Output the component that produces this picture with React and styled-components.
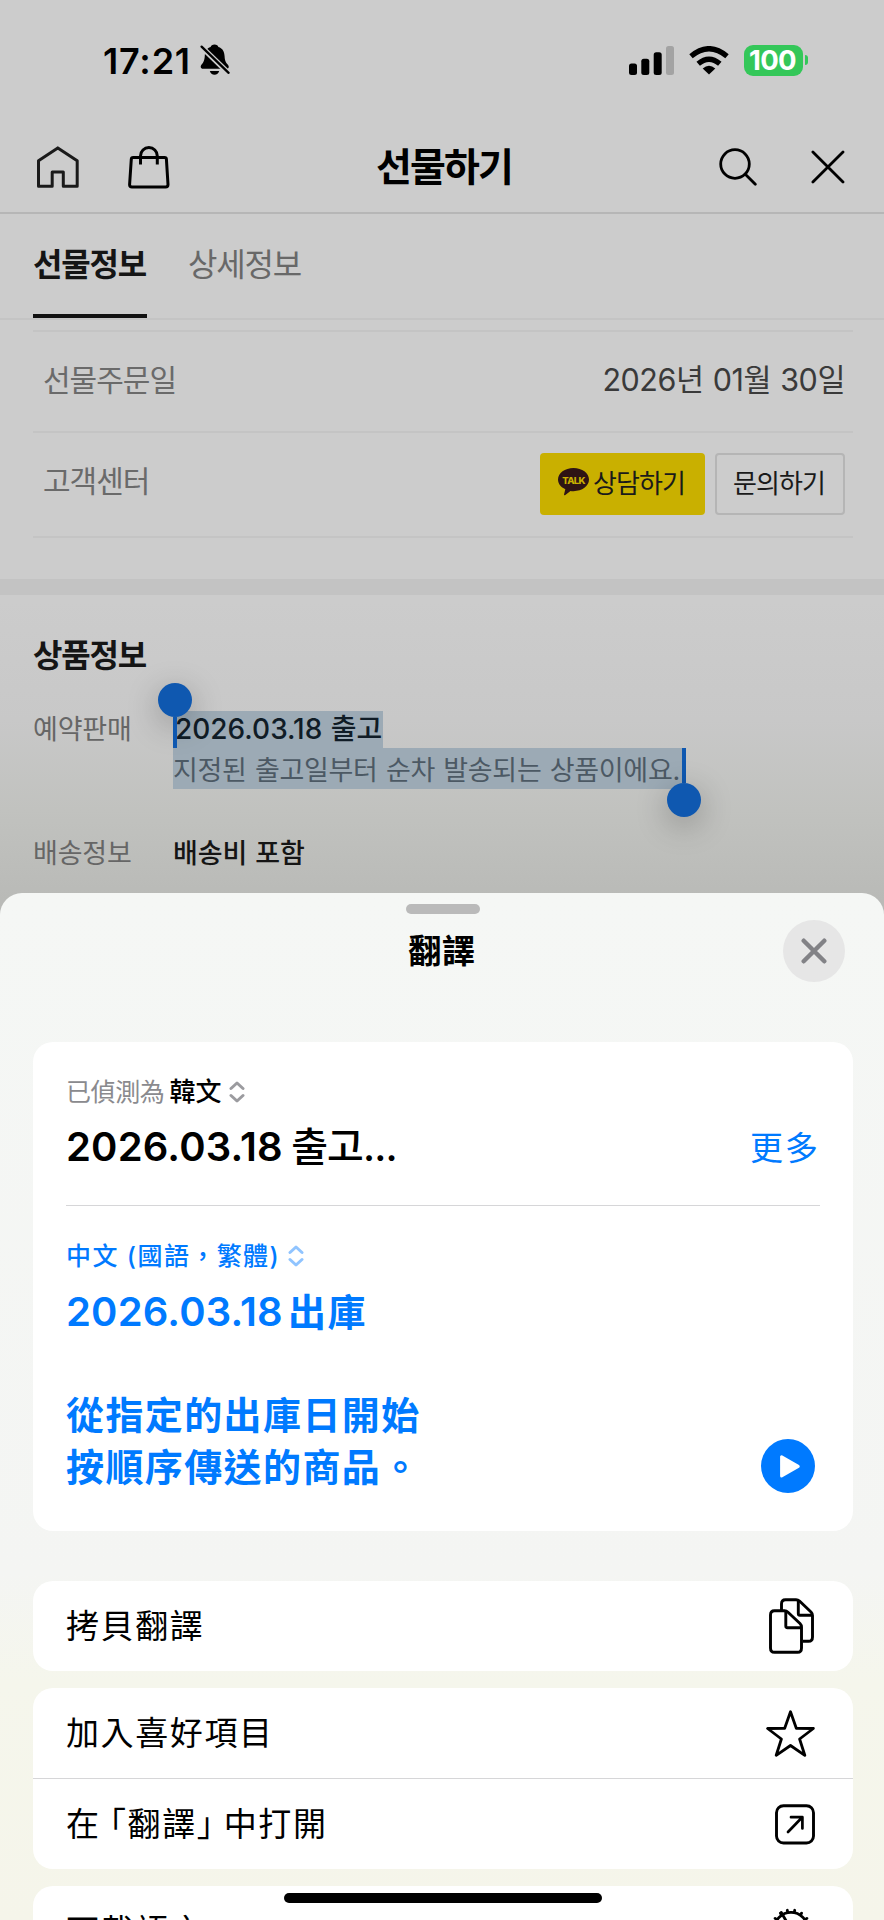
import React from "react";
import styled, { createGlobalStyle } from "styled-components";

function App() {
  return (
    <Screen>
      <GlobalStyle />
      <StatusBar />
      <Header />
      <Tabs>
        <Tab $active>선물정보</Tab>
        <Tab>상세정보</Tab>
      </Tabs>
      <OrderInfo />
      <Band />
      <ProductInfo />
      <TranslateSheet />
      <HomeIndicator />
    </Screen>
  );
}

function StatusBar() {
  return (
    <StatusWrap>
      <StatusTime>
        <Time>17:21</Time>
        <BellOff />
      </StatusTime>
      <StatusRight>
        <Signal />
        <Wifi />
        <Battery>
          <BatteryBody>100</BatteryBody>
          <BatteryCap />
        </Battery>
      </StatusRight>
    </StatusWrap>
  );
}

function Header() {
  return (
    <HeaderWrap>
      <HeaderSide>
        <svg width="42" height="42" viewBox="0 0 42 42" fill="none" stroke="#1a1a1a" strokeWidth="3" strokeLinejoin="round">
          <path d="M20.8 1.9L1.5 14.8V40.2H15.2V26H26.3V40.2H40.2V14.8Z" />
        </svg>
        <svg width="42" height="43" viewBox="0 0 42 43" fill="none" stroke="#000" strokeWidth="3" strokeLinejoin="round">
          <path d="M5.2 11.5H36.6Q38.3 11.5 38.4 13.2L40 38.5Q40 41 37.6 41H4Q1.5 41 1.6 38.5L3.3 13.2Q3.4 11.5 5.2 11.5Z" />
          <path d="M12.5 18.5V10a8.4 8.4 0 0 1 16.8 0V18.5" />
        </svg>
      </HeaderSide>
      <HeaderTitle>선물하기</HeaderTitle>
      <HeaderSide $right>
        <svg width="38" height="38" viewBox="0 0 38 38" fill="none" stroke="#000" strokeWidth="2.8" strokeLinecap="round">
          <circle cx="16" cy="16" r="14.3" />
          <path d="M26.3 26.3L36.3 36.3" />
        </svg>
        <svg width="34" height="34" viewBox="0 0 34 34" fill="none" stroke="#000" strokeWidth="2.8" strokeLinecap="round">
          <path d="M1.9 1.9L32 32M32 1.9L1.9 32" />
        </svg>
      </HeaderSide>
    </HeaderWrap>
  );
}

function OrderInfo() {
  return (
    <OrderList>
      <OrderRow $height={101}>
        <OrderLabel>선물주문일</OrderLabel>
        <OrderValue>2026년 01월 30일</OrderValue>
      </OrderRow>
      <OrderRow $height={105}>
        <OrderLabel $lift>고객센터</OrderLabel>
        <Buttons>
          <TalkButton>
            <TalkIcon />
            상담하기
          </TalkButton>
          <AskButton>문의하기</AskButton>
        </Buttons>
      </OrderRow>
    </OrderList>
  );
}

function ProductInfo() {
  return (
    <Product>
      <ProductTitle>상품정보</ProductTitle>
      <ProductRow>
        <ProductLabel>예약판매</ProductLabel>
        <Selection>
          <SelectedDate>2026.03.18 출고</SelectedDate>
          <SelectedNote>지정된 출고일부터 순차 발송되는 상품이에요.</SelectedNote>
          <Handle $start>
            <Knob />
            <Caret $height={31} />
          </Handle>
          <Handle>
            <Caret $height={35} />
            <Knob />
          </Handle>
        </Selection>
      </ProductRow>
      <ProductRow>
        <ProductLabel>배송정보</ProductLabel>
        <ProductValue>배송비 포함</ProductValue>
      </ProductRow>
    </Product>
  );
}

function TranslateSheet() {
  return (
    <Sheet>
      <Grabber />
      <SheetHeader>
        <SheetTitle>翻譯</SheetTitle>
        <CloseButton>
          <svg width="26" height="26" viewBox="0 0 26 26" fill="none" stroke="#828286" strokeWidth="4.4" strokeLinecap="round">
            <path d="M2.7 2.7L23.3 23.3M23.3 2.7L2.7 23.3" />
          </svg>
        </CloseButton>
      </SheetHeader>
      <Card>
        <Language>
          <Detected>已偵測為</Detected>
          <Lang>韓文</Lang>
          <Updown color="#9b9b9f" />
        </Language>
        <SourceRow>
          <Phrase>
            2026.03.18 <Korean>출고...</Korean>
          </Phrase>
          <More>更多</More>
        </SourceRow>
        <Divider />
        <Language $target>
          <TargetLang>中文 (國語，繁體)</TargetLang>
          <Updown color="#90c4ff" />
        </Language>
        <TargetDate>
          <Phrase>2026.03.18</Phrase>
          <Phrase $chinese>出庫</Phrase>
        </TargetDate>
        <TargetRow>
          <TargetText>
            從指定的出庫日開始
            <br />
            按順序傳送的商品。
          </TargetText>
          <PlayButton>
            <svg width="20" height="23" viewBox="0 0 20 23" fill="#fff" stroke="#fff" strokeWidth="3" strokeLinejoin="round">
              <path d="M1.6 1.7V21L18.2 11.4Z" />
            </svg>
          </PlayButton>
        </TargetRow>
      </Card>
      <Group $first>
        <Action>
          拷貝翻譯
          <CopyIcon />
        </Action>
      </Group>
      <Group>
        <Action>
          加入喜好項目
          <StarIcon />
        </Action>
        <Action $line>
          在 「翻譯」 中打開
          <OpenIcon />
        </Action>
      </Group>
      <Group>
        <Action>
          下載語言
          <GearIcon />
        </Action>
      </Group>
    </Sheet>
  );
}

/* icons */

const BellOff = () => (
  <svg width="30" height="32" viewBox="0 0 30 32">
    <path
      d="M14.5 0.5c2.2 0 3.6 1.1 3.9 2.5c4.4 1.3 6 5 6.2 9.2c.2 4.8 1.4 6.6 3.3 8.6c1.4 1.6 1 4-1 4H3c-2.4 0-3-2.6-1.4-4.3c2-2.2 2.9-4 3.2-8.8C5 7.6 6.6 4.3 10.6 3C11 1.6 12.3 .5 14.5 .5Z"
      fill="#000"
    />
    <path d="M9.8 27H19.2C18.6 29.4 16.8 30.8 14.5 30.8S10.4 29.4 9.8 27Z" fill="#000" />
    <path d="M1 2.5L29 29.5" stroke="#ccc" strokeWidth="5.4" />
    <path d="M1.6 2.6L28.6 28.8" stroke="#000" strokeWidth="2.3" strokeLinecap="round" />
  </svg>
);

const Signal = () => (
  <svg width="45" height="29" viewBox="0 0 45 29">
    <rect x="0" y="17.5" width="8" height="11.5" rx="2.5" />
    <rect x="12.3" y="12.7" width="8" height="16.3" rx="2.5" />
    <rect x="24.7" y="6.3" width="8" height="22.7" rx="2.5" />
    <rect x="37" y="0" width="8" height="29" rx="2.5" fill="#a3a3a3" />
  </svg>
);

const Wifi = () => (
  <svg width="40" height="29" viewBox="0 0 40 29">
    <path d="M20 28.5L13.7 22.4Q20 17.3 26.3 22.4Z" />
    <path d="M9.2 17.8Q20 8.6 30.8 17.8" fill="none" stroke="#000" strokeWidth="5.3" />
    <path d="M2 10.2Q20 -4.8 38 10.2" fill="none" stroke="#000" strokeWidth="5.3" />
  </svg>
);

const TalkIcon = () => (
  <svg width="31" height="28" viewBox="0 0 31 28">
    <path
      d="M15.5 0C24.1 0 31 5 31 11.6S24.1 23.2 15.5 23.2Q13.8 23.2 12.5 23L7 27.2Q5.7 27.6 6.1 26.3L7.3 21.2C3 19.4 0 16 0 11.6C0 5 6.9 0 15.5 0Z"
      fill="#2e1414"
    />
    <TalkText x="15.6" y="15.6" textAnchor="middle">
      TALK
    </TalkText>
  </svg>
);

const Updown = ({ color }) => (
  <svg width="16" height="22" viewBox="0 0 16 22" fill="none" stroke={color} strokeWidth="3" strokeLinecap="round" strokeLinejoin="round">
    <path d="M2 7.5L8 2L14 7.5M2 14.5L8 20L14 14.5" />
  </svg>
);

const CopyIcon = () => (
  <svg width="46" height="56" viewBox="0 0 46 56" fill="none" stroke="#000" strokeWidth="2.9" strokeLinejoin="round">
    <path d="M12.5 12V6Q12.5 1.7 16.5 1.7H27Q29 1.7 30.5 3L42 14Q43.5 15.5 43.5 17.5V39Q43.5 43.3 39.5 43.3H34" />
    <path d="M29.3 2.5V15.5Q29.3 17.3 31 17.3H43" />
    <path d="M5.5 12.8H15.5Q17.5 12.8 19 14.2L31 25.5Q32.5 27 32.5 29V50Q32.5 54.3 28.5 54.3H5.5Q1.5 54.3 1.5 50V17Q1.5 12.8 5.5 12.8Z" />
    <path d="M16.8 13.5V28Q16.8 29.7 18.5 29.7H32" />
  </svg>
);

const StarIcon = () => (
  <svg width="49" height="47" viewBox="0 0 49 47" fill="none" stroke="#000" strokeWidth="2.8" strokeLinejoin="round">
    <path d="M24.5 1.7L30.3 18.3L47.4 18.5L33.6 29L38.8 45.3L24.5 35.5L10.2 45.3L15.4 29L1.6 18.5L18.7 18.3Z" />
  </svg>
);

const OpenIcon = () => (
  <svg width="40" height="41" viewBox="0 0 40 41" fill="none" stroke="#000" strokeWidth="2.9" strokeLinecap="round" strokeLinejoin="round">
    <rect x="1.5" y="1.7" width="37" height="37.3" rx="7" />
    <path d="M13 28L27 13.5M16 13.2H27.4V24.5" strokeWidth="2.7" />
  </svg>
);

const teeth = Array.from({ length: 16 }, (_, i) => i * 22.5 + 11.25);

const GearIcon = () => (
  <GearSvg width="44" height="44" viewBox="0 0 44 44" fill="none" stroke="#000" strokeWidth="2.8" strokeLinecap="round">
    <circle cx="22" cy="22" r="16.6" />
    {teeth.map((deg) => (
      <path key={deg} d="M22 5V2.9" transform={`rotate(${deg} 22 22)`} />
    ))}
    <path d="M12.3 5.5L19.5 18M19.5 26L12.3 38.5M26.5 22H38.5" />
    <circle cx="22" cy="22" r="4.5" />
  </GearSvg>
);

/* page */

const GlobalStyle = createGlobalStyle`
  * {
    box-sizing: border-box;
  }
  body {
    margin: 0;
    background: #ccc;
  }
  svg {
    display: block;
    flex-shrink: 0;
  }
`;
const Screen = styled.div`
  position: relative;
  display: flex;
  flex-direction: column;
  width: 884px;
  height: 1920px;
  overflow: hidden;
  background: linear-gradient(#cccccc 600px, #c8c8c8 720px, #c1c2bf 810px, #b9bab7 900px);
  font-family: Inter, "Noto Sans CJK KR", sans-serif;
`;
const StatusWrap = styled.div`
  display: flex;
  justify-content: space-between;
  height: 120px;
  padding: 0 76px 0 103px;
`;
const StatusTime = styled.div`
  display: flex;
  align-items: center;
  gap: 10px;
`;
const Time = styled.span`
  width: 87px;
  padding-top: 1px;
  font-size: 36px;
  font-weight: 600;
  line-height: 40px;
  letter-spacing: 0.8px;
  white-space: nowrap;
`;
const StatusRight = styled.div`
  display: flex;
  align-items: center;
  gap: 15px;
`;
const Battery = styled.div`
  display: flex;
  align-items: center;
  gap: 2px;
`;
const BatteryBody = styled.div`
  width: 59px;
  height: 31px;
  padding-right: 2px;
  border-radius: 9px;
  background: #34c759;
  color: #fff;
  font-size: 27.5px;
  font-weight: 700;
  line-height: 31px;
  letter-spacing: -0.6px;
  text-align: center;
`;
const BatteryCap = styled.div`
  width: 3px;
  height: 10px;
  border-radius: 0 4px 4px 0;
  background: #34c759;
`;
const HeaderWrap = styled.div`
  display: flex;
  justify-content: space-between;
  align-items: center;
  height: 94px;
  padding: 2px 39px 0 37px;
  border-bottom: 2px solid #b6b6b6;
`;
const HeaderSide = styled.div`
  display: flex;
  align-items: center;
  justify-content: ${(props) => (props.$right ? "flex-end" : "flex-start")};
  gap: ${(props) => (props.$right ? 54 : 49)}px;
  width: 180px;
`;
const HeaderTitle = styled.h1`
  margin: 0;
  padding-left: 6px;
  font-size: 39px;
  font-weight: 700;
  line-height: 50px;
  letter-spacing: -1.9px;
`;
const Tabs = styled.div`
  display: flex;
  gap: 41px;
  height: 106px;
  padding: 0 33px;
  border-bottom: 2px solid #c4c4c4;
`;
const Tab = styled.div`
  height: 104px;
  width: 114px;
  border-bottom: 4px solid ${(props) => (props.$active ? "#111" : "transparent")};
  color: ${(props) => (props.$active ? "#151515" : "#686868")};
  font-size: 32px;
  font-weight: ${(props) => (props.$active ? 700 : 400)};
  line-height: 101px;
  letter-spacing: -1.2px;
  white-space: nowrap;
`;
const OrderList = styled.div`
  margin: 10px 31px 0 33px;
  border-top: 2px solid #c4c4c4;
`;
const OrderRow = styled.div`
  display: flex;
  justify-content: space-between;
  align-items: center;
  height: ${(props) => props.$height}px;
  padding: 0 8px 0 10px;
  border-bottom: 2px solid #c4c4c4;
`;
const OrderLabel = styled.span`
  padding-bottom: ${(props) => (props.$lift ? 8 : 4)}px;
  color: #6a6a6a;
  font-size: 30px;
  line-height: 40px;
  letter-spacing: -1px;
`;
const OrderValue = styled.span`
  padding-bottom: 3px;
  color: #3a3a3a;
  font-size: 30.5px;
  line-height: 40px;
  letter-spacing: -0.45px;
  word-spacing: 1px;
`;
const Buttons = styled.div`
  display: flex;
  gap: 10px;
  padding-bottom: 2px;
`;
const TalkButton = styled.button`
  display: flex;
  align-items: center;
  gap: 4px;
  width: 165px;
  height: 62px;
  padding: 0 0 4px 18px;
  border: 0;
  border-radius: 4px;
  background: #c9b000;
  color: #1a1a1a;
  font-family: inherit;
  font-size: 26px;
  letter-spacing: -0.9px;
  white-space: nowrap;
`;
const AskButton = styled(TalkButton)`
  width: 130px;
  padding: 0 0 4px 16px;
  border: 2px solid #b5b5b5;
  background: transparent;
`;
const TalkText = styled.text`
  fill: #c9b000;
  font-family: Inter, sans-serif;
  font-size: 9.5px;
  font-weight: 800;
  letter-spacing: -0.6px;
`;
const Band = styled.div`
  height: 16px;
  margin-top: 41px;
  background: #c3c3c3;
`;
const Product = styled.section`
  display: flex;
  flex-direction: column;
  padding: 37px 33px 0;
`;
const ProductTitle = styled.h2`
  margin: 0 0 31px;
  color: #151515;
  font-size: 32px;
  font-weight: 700;
  line-height: 48px;
  letter-spacing: -1.2px;
`;
const ProductRow = styled.div`
  display: flex;
  margin-bottom: 46px;
  font-size: 27px;
  line-height: 37px;
  word-spacing: 1px;
`;
const ProductLabel = styled.span`
  width: 140px;
  color: #666;
  letter-spacing: -0.2px;
`;
const ProductValue = styled.span`
  color: #151515;
  font-weight: 500;
  letter-spacing: -0.1px;
`;
const Selection = styled.div`
  position: relative;
  display: flex;
  flex-direction: column;
  align-items: flex-start;
`;
const SelectedDate = styled.span`
  width: 210px;
  padding-left: 2px;
  background: #9caab5;
  color: #101c26;
  font-size: 28px;
  font-weight: 500;
  white-space: nowrap;
`;
const SelectedNote = styled.span`
  width: 510px;
  padding-top: 4px;
  background: #9caab5;
  color: #4c5964;
  line-height: 37px;
  letter-spacing: -0.3px;
  white-space: nowrap;
`;
const Handle = styled.div`
  position: absolute;
  display: flex;
  flex-direction: column;
  align-items: center;
  ${(props) => (props.$start ? "left: -15px; top: -28px;" : "right: -18px; bottom: -28px;")}
`;
const Knob = styled.div`
  width: 34px;
  height: 34px;
  border-radius: 50%;
  background: #0f58b0;
  box-shadow: 0 8px 32px rgba(0, 0, 0, 0.28);
`;
const Caret = styled.div`
  width: 4px;
  height: ${(props) => props.$height}px;
  background: #0f58b0;
`;

/* sheet */

const Sheet = styled.div`
  position: absolute;
  top: 893px;
  left: 0;
  right: 0;
  bottom: 0;
  display: flex;
  flex-direction: column;
  padding: 11px 31px 0 33px;
  border-radius: 22px 22px 0 0;
  background: linear-gradient(#f5f7f5 0, #f4f5f3 680px, #f5f6ec 790px, #f5f5ea 1027px);
  font-family: Inter, "Noto Sans CJK TC", "Noto Sans CJK KR", sans-serif;
`;
const Grabber = styled.div`
  flex-shrink: 0;
  align-self: center;
  width: 74px;
  height: 10px;
  border-radius: 5px;
  background: #bababa;
`;
const SheetHeader = styled.div`
  display: grid;
  grid-template-columns: 1fr auto 1fr;
  align-items: center;
  flex-shrink: 0;
  height: 62px;
  margin: 6px 8px 60px 0;
`;
const SheetTitle = styled.h2`
  grid-column: 2;
  margin: 0 -7px 0 -1px;
  font-size: 33px;
  font-weight: 700;
  line-height: 40px;
  letter-spacing: 0.8px;
`;
const CloseButton = styled.button`
  justify-self: end;
  display: flex;
  align-items: center;
  justify-content: center;
  width: 62px;
  height: 62px;
  padding: 0;
  border: 0;
  border-radius: 50%;
  background: #e6e6e6;
`;
const Card = styled.div`
  flex-shrink: 0;
  height: 489px;
  padding: 33px 33px 0;
  border-radius: 20px;
  background: #fff;
`;
const Language = styled.div`
  display: flex;
  align-items: center;
  height: 34px;
  margin-top: ${(props) => (props.$target ? 33 : 0)}px;
  gap: 8px;
  font-size: 25px;
  line-height: 34px;
  white-space: nowrap;
`;
const Detected = styled.span`
  margin-right: -3px;
  color: #8a8a8e;
  letter-spacing: -0.4px;
`;
const Lang = styled.span`
  font-size: 26px;
  font-weight: 500;
`;
const TargetLang = styled.span`
  color: #007aff;
  font-weight: 500;
  letter-spacing: 1.4px;
`;
const SourceRow = styled.div`
  display: flex;
  justify-content: space-between;
  align-items: center;
  height: 76px;
`;
const Phrase = styled.span`
  font-size: ${(props) => (props.$chinese ? 38 : 40)}px;
  font-weight: ${(props) => (props.$chinese ? 700 : 600)};
  line-height: 50px;
  letter-spacing: ${(props) => (props.$chinese ? 1.6 : 0.2)}px;
`;
const Korean = styled.span`
  margin-left: -2px;
  font-weight: 500;
  letter-spacing: -0.9px;
`;
const More = styled.span`
  padding-top: 2px;
  color: #007aff;
  font-size: 33px;
  line-height: 40px;
  letter-spacing: 2px;
`;
const Divider = styled.div`
  height: 1px;
  margin-top: 20px;
  background: #d6d6d8;
`;
const TargetDate = styled.div`
  display: flex;
  gap: 5px;
  margin-top: 14px;
  color: #007aff;
`;
const TargetRow = styled.div`
  display: flex;
  justify-content: space-between;
  align-items: flex-end;
  margin-top: 53px;
`;
const TargetText = styled.p`
  margin: 0;
  color: #007aff;
  font-size: 38px;
  font-weight: 700;
  line-height: 51.5px;
  letter-spacing: 1.4px;
`;
const PlayButton = styled.button`
  display: flex;
  align-items: center;
  justify-content: center;
  width: 54px;
  height: 54px;
  margin-right: 5px;
  padding: 0 0 0 4px;
  border: 0;
  border-radius: 50%;
  background: #007aff;
`;
const Group = styled.div`
  flex-shrink: 0;
  margin-top: ${(props) => (props.$first ? 50 : 17)}px;
  border-radius: 20px;
  background: #fff;
`;
const Action = styled.div`
  display: flex;
  justify-content: space-between;
  align-items: center;
  height: ${(props) => (props.$line ? 91 : 90)}px;
  padding: 0 38px 0 33px;
  border-top: ${(props) => (props.$line ? "1px solid #d6d6d8" : "0")};
  font-size: 33px;
  line-height: 40px;
  letter-spacing: 1.6px;
  word-spacing: -2px;
  font-feature-settings: "halt";
`;
const GearSvg = styled.svg`
  margin: 0 2px 5px 0;
`;
const HomeIndicator = styled.div`
  position: absolute;
  left: 284px;
  bottom: 17px;
  width: 318px;
  height: 10px;
  border-radius: 5px;
  background: #000;
`;

export default App;
